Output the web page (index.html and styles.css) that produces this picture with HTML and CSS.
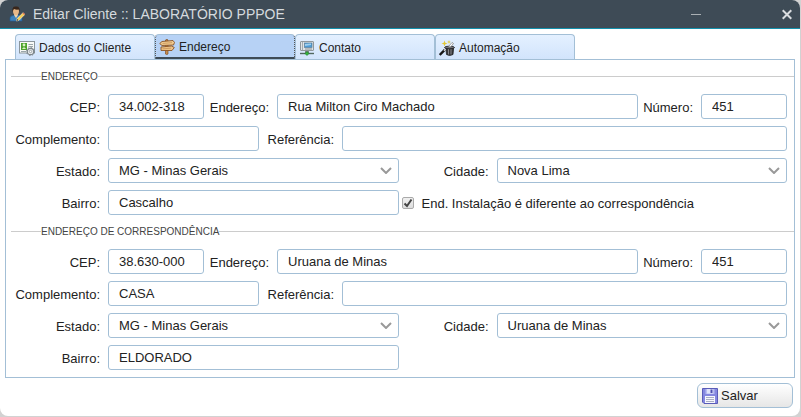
FILE: index.html
```html
<!DOCTYPE html>
<html lang="pt-BR">
<head>
<meta charset="utf-8">
<title>Editar Cliente</title>
<link rel="stylesheet" href="styles.css">
</head>
<body>
<main class="window">
  <header class="titlebar">
    <svg class="icon" viewBox="0 0 16 16" aria-hidden="true">
      <path d="M1 15V12Q1 10 4 9.500L7 8.500L11 9.500Q13 10 13 12V15Z" fill="#3c82bd" stroke="#235a8c" stroke-width=".7"/>
      <path d="M5 9L7 12L9 9L8.500 7H5.500Z" fill="#f1d2a8"/>
      <ellipse cx="7" cy="5" rx="3" ry="4" fill="#e8b887"/>
      <path d="M3.600 6Q2.500 0 7 .5Q11.500 0 10.400 6L9.700 3.500Q7 4 5 3L4.300 4Z" fill="#38261b"/>
      <path d="M7.500 15L8.200 12.500L14 6.700L15.800 8.500L10 14.300Z" fill="#f6ce55" stroke="#fff4cf" stroke-width=".6"/>
      <path d="M7.500 15L8.200 13L9.500 14.300Z" fill="#333"/><path d="M13.500 7.200L14.300 6.400L16 8.100L15.200 8.900Z" fill="#dc6b55"/>
    </svg>
    <h1 class="title">Editar Cliente :: LABORATÓRIO PPPOE</h1>
    <button class="win-button" type="button" aria-label="Minimizar"><svg width="10" height="11" viewBox="0 0 10 11"><path d="M0 5.500H10" stroke="#aab0b4"/></svg></button>
    <button class="win-button" type="button" aria-label="Fechar"><svg width="10" height="11" viewBox="0 0 10 11"><path d="M.7 1.200L9.300 9.800M9.300 1.200L.7 9.800" stroke="#dadde0" stroke-width="2"/></svg></button>
  </header>

  <nav class="tabs">
    <button class="tab" type="button">
      <svg class="icon" viewBox="0 0 16 16" aria-hidden="true">
        <rect x=".5" y="1.500" width="15" height="11.500" fill="#f7f9f7" stroke="#8b969c"/>
        <rect x="2" y="3" width="6" height="7" fill="#4da32c"/><circle cx="5" cy="5" r="1.400" fill="#d9f1c5"/><path d="M3 9Q5 5.500 7 9Z" fill="#d9f1c5"/>
        <path d="M9.500 4.500H14M9.500 6.500H14M2 11.500H7" stroke="#9aa5aa"/>
        <circle cx="11.500" cy="11.500" r="3.200" fill="#e8ebed" stroke="#7d868c" stroke-width="1.200"/>
        <circle cx="11.500" cy="11.500" r="4" fill="none" stroke="#7d868c" stroke-dasharray="1.500 1.600"/>
        <circle cx="11.500" cy="11.500" r="1.200" fill="#fff" stroke="#7d868c" stroke-width=".7"/>
      </svg>
      <span>Dados do Cliente</span>
    </button>
    <button class="tab tab-active" type="button" aria-current="page">
      <svg class="icon" viewBox="0 0 16 16" aria-hidden="true">
        <path d="M6.500 1L8 .3L9 1V15L7.500 15.700L6.500 15Z" fill="#c78a4c" stroke="#80502a" stroke-width=".7"/>
        <path d="M3 2.500L14 1.500L15.500 3.500L14.500 6L3 6.500L.7 4.500Z" fill="#f0c98f" stroke="#8a5527" stroke-width=".9"/>
        <path d="M2 8L12.500 7L15.300 8.500L13 11.500L2 11.500Z" fill="#edc185" stroke="#8a5527" stroke-width=".9"/>
        <path d="M3.500 4.500L13 3.600M3.500 9.800L12 9.200" stroke="#c38d50" stroke-width=".7"/>
      </svg>
      <span>Endereço</span>
    </button>
    <button class="tab" type="button">
      <svg class="icon" viewBox="0 0 16 16" aria-hidden="true">
        <rect x="1.500" y="1.500" width="13" height="9" rx=".5" fill="#e0e4e6" stroke="#91989c"/>
        <path d="M3.500 2V10" stroke="#a5acb0"/><rect x="5.500" y="3" width="7.500" height="4.500" fill="#4e9bd5" stroke="#5a7e99" stroke-width=".7"/>
        <path d="M6 4L12 3.400V5L6 6Z" fill="#9ed0f0"/><path d="M6 9H13" stroke="#8b9296"/>
        <path d="M6 11H10V13H6Z" fill="#7d8784"/><path d="M1 13.500H15" stroke="#526860" stroke-width="1.400"/>
        <path d="M8 11.500L10 13.500L8 15.500L6 13.500Z" fill="#35b83a" stroke="#147a28" stroke-width=".6"/>
      </svg>
      <span>Contato</span>
    </button>
    <button class="tab" type="button">
      <svg class="icon" viewBox="0 0 16 16" aria-hidden="true">
        <path d="M6.800 7.500H14.700L14 14.500Q10.500 16.500 7.500 14.500Z" fill="#38383a" stroke="#151516" stroke-width=".7"/>
        <path d="M9.500 9V14.500M12 9V14.500" stroke="#a0a0a3" stroke-width=".8"/>
        <ellipse cx="10.500" cy="7.500" rx="5" ry="1.300" fill="#707074" stroke="#1c1c1e" stroke-width=".8"/>
        <path d="M9.500 6.500L13 2.500L14.500 3.500L12 6.500" fill="#fff" stroke="#777" stroke-width=".7"/>
        <path d="M.7 15L6 9.700" stroke="#161616" stroke-width="2.400"/><path d="M5 10.700L6.500 9.200" stroke="#d7d7d7" stroke-width="1.600"/>
        <path d="M5.500 .5L6.300 2.700L8.500 3.500L6.300 4.300L5.500 6.500L4.700 4.300L2.500 3.500L4.700 2.700ZM10 0L10.500 1.500L12 2L10.500 2.500L10 4L9.500 2.500L8 2L9.500 1.500Z" fill="#e2c837"/>
      </svg>
      <span>Automação</span>
    </button>
  </nav>

  <form class="form">
    <div class="panel">
      <fieldset class="group">
        <legend>ENDEREÇO</legend>
        <div class="row">
          <label class="lead" for="cep1">CEP:</label><input class="field w-cep" id="cep1" type="text" value="34.002-318">
          <label class="w-mid" for="end1">Endereço:</label><input class="field grow" id="end1" type="text" value="Rua Milton Ciro Machado">
          <label class="w-num-label" for="num1">Número:</label><input class="field w-num" id="num1" type="text" value="451">
        </div>
        <div class="row">
          <label class="lead" for="comp1">Complemento:</label><input class="field w-comp" id="comp1" type="text">
          <label class="w-ref" for="ref1">Referência:</label><input class="field grow" id="ref1" type="text">
        </div>
        <div class="row">
          <label class="lead" for="uf1">Estado:</label>
          <div class="cell grow"><select class="field" id="uf1"><option>MG - Minas Gerais</option></select><svg class="chevron" viewBox="0 0 12 7"><path d="M1 1L6 6L11 1" /></svg></div>
          <label class="w-city" for="cid1">Cidade:</label>
          <div class="cell grow"><select class="field" id="cid1"><option>Nova Lima</option></select><svg class="chevron" viewBox="0 0 12 7"><path d="M1 1L6 6L11 1" /></svg></div>
        </div>
        <div class="row">
          <label class="lead" for="bai1">Bairro:</label>
          <div class="cell grow"><input class="field" id="bai1" type="text" value="Cascalho"></div>
          <div class="check grow"><input class="checkbox" id="dif" type="checkbox" checked><svg class="tick" viewBox="0 0 12 12"><path d="M2.500 6.500L5 9L9.500 2.500" /></svg><label for="dif">End. Instalação é diferente ao correspondência</label></div>
        </div>
      </fieldset>

      <fieldset class="group">
        <legend>ENDEREÇO DE CORRESPONDÊNCIA</legend>
        <div class="row">
          <label class="lead" for="cep2">CEP:</label><input class="field w-cep" id="cep2" type="text" value="38.630-000">
          <label class="w-mid" for="end2">Endereço:</label><input class="field grow" id="end2" type="text" value="Uruana de Minas">
          <label class="w-num-label" for="num2">Número:</label><input class="field w-num" id="num2" type="text" value="451">
        </div>
        <div class="row">
          <label class="lead" for="comp2">Complemento:</label><input class="field w-comp" id="comp2" type="text" value="CASA">
          <label class="w-ref" for="ref2">Referência:</label><input class="field grow" id="ref2" type="text">
        </div>
        <div class="row">
          <label class="lead" for="uf2">Estado:</label>
          <div class="cell grow"><select class="field" id="uf2"><option>MG - Minas Gerais</option></select><svg class="chevron" viewBox="0 0 12 7"><path d="M1 1L6 6L11 1" /></svg></div>
          <label class="w-city" for="cid2">Cidade:</label>
          <div class="cell grow"><select class="field" id="cid2"><option>Uruana de Minas</option></select><svg class="chevron" viewBox="0 0 12 7"><path d="M1 1L6 6L11 1" /></svg></div>
        </div>
        <div class="row">
          <label class="lead" for="bai2">Bairro:</label>
          <div class="cell grow"><input class="field" id="bai2" type="text" value="ELDORADO"></div>
          <div class="check grow"></div>
        </div>
      </fieldset>
    </div>

    <footer class="actions">
      <button class="save" type="submit">
        <svg class="icon" viewBox="0 0 16 16" aria-hidden="true">
          <path d="M.5 .5H15.500V15.500H2L.5 14Z" fill="#8587e0" stroke="#5a5cb8"/>
          <path d="M3.500 1H12.500V6H3.500Z" fill="#b7bcf1"/><path d="M5 1H11V5.500H5Z" fill="#dfe2fa"/><path d="M8.500 1.500H10.500V5H8.500Z" fill="#4c4faf"/>
          <path d="M3 8H13V15H3Z" fill="#f6f7fd"/><path d="M4 9.500H12M4 11.500H12M4 13.500H12" stroke="#a9adc4"/>
        </svg>
        <span>Salvar</span>
      </button>
    </footer>
  </form>
</main>
</body>
</html>
```
FILE: styles.css
```css
* { box-sizing: border-box; }

body {
  margin: 0;
  background: #d2d2d2;
  color: #222;
  font: 13px/16px "Liberation Sans", Arial, sans-serif;
}

button, input, select { font: inherit; color: inherit; }

.window {
  margin-right: 1px;
  padding-bottom: 8px;
  overflow: hidden;
  border-radius: 8px;
  background: #fff;
}

.icon { flex: none; width: 16px; height: 16px; }

.titlebar {
  display: flex;
  align-items: center;
  height: 29px;
  padding: 0 8px 0 9px;
  border-bottom: 1px solid #1390ab;
  background: #3e4b56;
}

.title {
  flex: 1;
  margin: 0 0 0 8px;
  color: #d5dade;
  font-size: 14px;
  font-weight: 400;
  line-height: 16px;
}

.win-button {
  display: flex;
  margin-left: 81px;
  padding: 0;
  border: 0;
  background: none;
}

.tabs { display: flex; padding: 5px 15px 0; }

.tab {
  display: flex;
  align-items: center;
  gap: 4px;
  width: 140px;
  height: 25px;
  padding: 2px 3px 0;
  border: 1px solid #a3bfd6;
  border-bottom: 0;
  border-radius: 4px 4px 0 0;
  background: linear-gradient(#e4f0ff, #d2e4fc);
  font-size: 12px;
}

.tab-active {
  border-right: 1px dotted #555;
  border-bottom: 2px solid #3e4b56;
  border-left: 1px dotted #555;
  background: #b7d2f5;
}

.panel {
  margin: 0 5px;
  padding: 10px 0 7px 5px;
  border: 1px solid #a3bfd6;
}

.group {
  min-width: 0;
  margin: 0;
  padding: 12px 7px 0 0;
  border: 0;
  border-top: 1px solid #ccc;
}

.group + .group { margin-top: 10px; }

legend {
  margin-left: 30px;
  padding: 1px 0 0;
  color: #444;
  font-size: 10px;
  line-height: 11px;
}

.row { display: flex; align-items: center; gap: 8px; }
.row + .row { margin-top: 7px; }

label { flex: none; padding-top: 2px; text-align: right; white-space: nowrap; }

.lead { width: 89px; }
.w-mid { width: 57px; }
.w-num-label { width: 47px; }
.w-ref { width: 67px; }
.w-city { width: 82px; }
.w-mid, .w-num-label { display: flex; justify-content: flex-end; }

.field {
  width: 100%;
  min-width: 0;
  height: 25px;
  padding: 0 10px;
  border: 1px solid #a3bfd6;
  border-radius: 3px;
  background: #fff;
}

.grow { flex: 1 1 0; }
.w-cep { width: 96px; }
.w-num { width: 86px; }
.w-comp { width: 151px; }

.cell { display: flex; position: relative; min-width: 0; }
select.field { appearance: none; }

.chevron {
  position: absolute;
  top: 9px;
  right: 7px;
  width: 12px;
  height: 7px;
  pointer-events: none;
}

.chevron path { fill: none; stroke: #999; stroke-width: 2; }

/* Takes the room of the city label, its gap and its select. */
.check {
  display: flex;
  position: relative;
  align-items: center;
  gap: 8px;
  flex-basis: 95px;
  margin-left: -5px;
}

.checkbox {
  appearance: none;
  flex: none;
  width: 12px;
  height: 12px;
  margin: 0;
  border: 1px solid #aaa;
  border-radius: 2px;
  background: linear-gradient(#f0f0f0, #ddd);
}

.tick { position: absolute; left: 0; width: 12px; height: 12px; pointer-events: none; }
.tick path { fill: none; stroke: #444; stroke-width: 2; }
.checkbox:not(:checked) + .tick { display: none; }

.actions { display: flex; justify-content: flex-end; padding: 5px 7px 0; }

.save {
  display: flex;
  align-items: center;
  gap: 3px;
  width: 96px;
  height: 25px;
  padding: 0 4px;
  border: 1px solid #a3bfd6;
  border-radius: 6px;
  background: linear-gradient(#fff, #e6e6e6);
}
```
